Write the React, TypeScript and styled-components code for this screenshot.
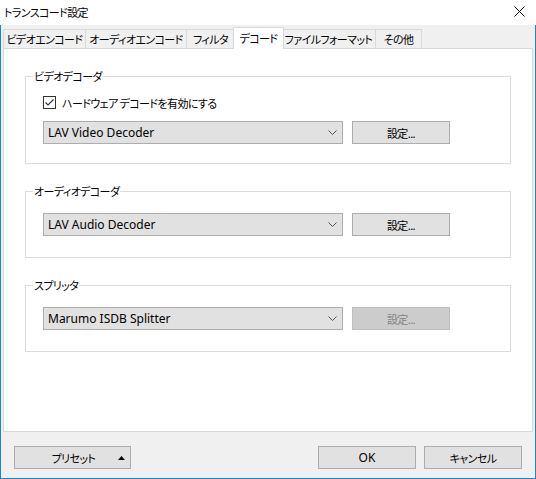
import styled, { createGlobalStyle } from 'styled-components';

const GlobalStyle = createGlobalStyle`
  html, body {
    margin: 0;
    padding: 0;
  }
  body {
    font-family: "Noto Sans CJK JP", "Noto Sans", sans-serif;
    font-size: 11px;
    letter-spacing: -0.6px;
    font-feature-settings: "palt";
    color: #000;
  }
`;

const Latin = styled.span`
  font-family: "Noto Sans", "Noto Sans CJK JP", sans-serif;
  font-size: 12px;
  letter-spacing: 0;
`;

const Window = styled.div`
  width: 536px;
  height: 479px;
  display: flex;
  flex-direction: column;
  background: #f0f0f0;
  box-sizing: border-box;
`;

const TitleBar = styled.div`
  height: 25px;
  flex: none;
  background: #fff;
  display: flex;
  align-items: center;
  justify-content: space-between;
  padding: 0 11px 2px 4px;
  box-sizing: border-box;
`;

const Title = styled.span`
  line-height: 16px;
`;

const Body = styled.div`
  flex: 1;
  display: flex;
  flex-direction: column;
  border: 1px solid #1a86d9;
  border-top: none;
  padding: 0 2px;
  box-sizing: border-box;
`;

const TabStrip = styled.div`
  height: 23px;
  flex: none;
  display: flex;
  align-items: flex-end;
  position: relative;
  z-index: 1;
`;

const Tab = styled.div<{ $w: number; $active?: boolean }>`
  width: ${(p) => p.$w}px;
  height: ${(p) => (p.$active ? 22 : 19)}px;
  margin: ${(p) => (p.$active ? '0 -2px -1px -2px' : '0 0 0 -1px')};
  background: ${(p) => (p.$active ? '#fff' : '#f0f0f0')};
  border: 1px solid #d9d9d9;
  border-bottom: none;
  box-sizing: border-box;
  display: flex;
  justify-content: center;
  align-items: ${(p) => (p.$active ? 'flex-start' : 'center')};
  padding-top: ${(p) => (p.$active ? '2px' : '0')};
  line-height: 16px;
  white-space: nowrap;
  position: relative;
  z-index: ${(p) => (p.$active ? 2 : 1)};

  &:first-child {
    margin-left: 0;
  }
`;

const Panel = styled.div`
  flex: 1;
  background: #fff;
  border: 1px solid #d9d9d9;
  padding: 27px 21px 0 21px;
  display: flex;
  flex-direction: column;
  gap: 27px;
`;

const Group = styled.div<{ $pt: number; $pb: number }>`
  position: relative;
  border: 1px solid #dcdcdc;
  padding: ${(p) => p.$pt}px 0 ${(p) => p.$pb}px 17px;
  display: flex;
  flex-direction: column;
  gap: 12px;
`;

const Legend = styled.span`
  position: absolute;
  top: -9px;
  left: 7px;
  padding: 0 1px;
  background: #fff;
  line-height: 16px;
`;

const CheckRow = styled.label`
  display: flex;
  align-items: center;
  height: 13px;
  gap: 6px;
  line-height: 16px;
`;

const CheckBox = styled.span`
  width: 13px;
  height: 13px;
  box-sizing: border-box;
  border: 1px solid #333;
  background: #fff;
  display: flex;
  align-items: center;
  justify-content: center;
`;

const Row = styled.div`
  display: flex;
  gap: 9px;
`;

const Combo = styled.div`
  width: 300px;
  height: 23px;
  box-sizing: border-box;
  background: #e1e1e1;
  border: 1px solid #adadad;
  display: flex;
  align-items: center;
  justify-content: space-between;
  padding: 0 5px 0 4px;
  line-height: 16px;
`;

const Button = styled.div<{ $w?: number; $disabled?: boolean }>`
  width: ${(p) => p.$w ?? 98}px;
  height: 23px;
  box-sizing: border-box;
  background: ${(p) => (p.$disabled ? '#cccccc' : '#e1e1e1')};
  border: 1px solid ${(p) => (p.$disabled ? '#bfbfbf' : '#adadad')};
  color: ${(p) => (p.$disabled ? '#838383' : '#000')};
  display: flex;
  align-items: center;
  justify-content: center;
  line-height: 16px;
`;

const PresetButton = styled(Button)`
  justify-content: space-between;
  padding: 0 5px 0 0;
`;

const PresetLabel = styled.span`
  flex: 1;
  text-align: center;
  padding-left: 14px;
`;

const Footer = styled.div`
  height: 46px;
  flex: none;
  display: flex;
  align-items: flex-start;
  padding: 14px 11px 0 11px;
  box-sizing: border-box;
  gap: 8px;
`;

const Spacer = styled.div`
  flex: 1;
`;

const Chevron = () => (
  <svg width="9" height="5" viewBox="0 0 9 5">
    <path d="M0.5 0.5 L4.5 4.5 L8.5 0.5" fill="none" stroke="#555" strokeWidth="1" />
  </svg>
);

const CloseIcon = () => (
  <svg width="11" height="11" viewBox="0 0 11 11">
    <path d="M0.5 0.5 L10.5 10.5 M10.5 0.5 L0.5 10.5" stroke="#000" strokeWidth="1" />
  </svg>
);

const CheckMark = () => (
  <svg width="11" height="11" viewBox="0 0 11 11">
    <path d="M1.5 5.5 L4 8 L9.5 2.5" fill="none" stroke="#333" strokeWidth="1.2" />
  </svg>
);

const UpArrow = () => (
  <svg width="7" height="4" viewBox="0 0 7 4">
    <path d="M0 4 L3.5 0 L7 4 Z" fill="#000" />
  </svg>
);

const tabs = [
  { label: 'ビデオエンコード', w: 83 },
  { label: 'オーディオエンコード', w: 102 },
  { label: 'フィルタ', w: 49 },
  { label: 'デコード', w: 51, active: true },
  { label: 'ファイルフォーマット', w: 95 },
  { label: 'その他', w: 47 },
];

const DecoderRow = ({ value, disabled }: { value: string; disabled?: boolean }) => (
  <Row>
    <Combo>
      <Latin>{value}</Latin>
      <Chevron />
    </Combo>
    <Button $disabled={disabled}>設定...</Button>
  </Row>
);

export default function App() {
  return (
    <>
      <GlobalStyle />
      <Window>
        <TitleBar>
          <Title>トランスコード設定</Title>
          <CloseIcon />
        </TitleBar>
        <Body>
          <TabStrip>
            {tabs.map((t) => (
              <Tab key={t.label} $w={t.w} $active={t.active}>
                {t.label}
              </Tab>
            ))}
          </TabStrip>
          <Panel>
            <Group $pt={19} $pb={19}>
              <Legend>ビデオデコーダ</Legend>
              <CheckRow>
                <CheckBox>
                  <CheckMark />
                </CheckBox>
                ハードウェア デコードを有効にする
              </CheckRow>
              <DecoderRow value="LAV Video Decoder" />
            </Group>
            <Group $pt={21} $pb={21}>
              <Legend>オーディオデコーダ</Legend>
              <DecoderRow value="LAV Audio Decoder" />
            </Group>
            <Group $pt={21} $pb={21}>
              <Legend>スプリッタ</Legend>
              <DecoderRow value="Marumo ISDB Splitter" disabled />
            </Group>
          </Panel>
          <Footer>
            <PresetButton $w={117}>
              <PresetLabel>プリセット</PresetLabel>
              <UpArrow />
            </PresetButton>
            <Spacer />
            <Button>
              <Latin>OK</Latin>
            </Button>
            <Button>キャンセル</Button>
          </Footer>
        </Body>
      </Window>
    </>
  );
}
